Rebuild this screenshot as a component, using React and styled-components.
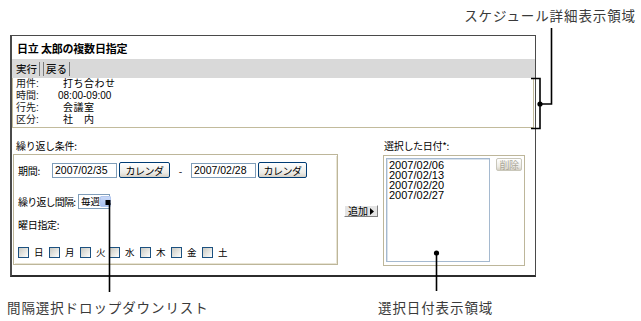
import React from "react";
import styled, { createGlobalStyle } from "styled-components";

const Global = createGlobalStyle`
  html, body { margin: 0; padding: 0; background: #fff; }
  body { font-family: "Noto Sans CJK JP", "Liberation Sans", sans-serif; color: #000; }
`;

const Page = styled.div`
  position: relative;
  width: 641px;
  height: 321px;
  box-sizing: border-box;
  padding: 35px 0 0 10px;
  overflow: hidden;
`;

const Panel = styled.div`
  width: 526px;
  height: 242px;
  box-sizing: border-box;
  border: 1px solid #4a4a4a;
  border-left-width: 2px;
  border-bottom-width: 2px;
  border-bottom-color: #2c2c2c;
  display: flex;
  flex-direction: column;
  background: #fff;
`;

const Title = styled.div`
  height: 23px;
  display: flex;
  align-items: center;
  padding-left: 5px;
  font-size: 11px;
  font-weight: bold;
  letter-spacing: -0.2px;
`;

const Toolbar = styled.div`
  height: 19px;
  background: #d9d9d9;
  display: flex;
  align-items: center;
  padding-left: 4px;
  font-size: 10.5px;
  font-weight: 500;
  color: #111;
`;

const ToolItem = styled.span`
  padding: 0 2px 0 ${(p) => (p.$first ? 0 : 2)}px;
  margin-right: 3px;
  line-height: 14px;
  border-right: 1px solid #7a7a7a;
  border-left: ${(p) => (p.$first ? "none" : "1px solid #7a7a7a")};
`;

const Details = styled.div`
  height: 50px;
  box-sizing: border-box;
  margin-right: 1px;
  border: 1px solid #c2bb9c;
  border-top: none;
  padding: 0 0 0 3px;
  display: grid;
  grid-template-columns: 46px 1fr;
  grid-auto-rows: 12px;
  font-family: "Liberation Sans", "Noto Sans CJK JP", sans-serif;
  font-size: 10px;
  line-height: 12px;
`;

const DLabel = styled.span`
  color: #222;
`;

const DValue = styled.span`
  margin-left: ${(p) => p.$indent || 0}px;
  letter-spacing: ${(p) => (p.$num ? "0" : "0.5px")};
`;

const Lower = styled.div`
  flex: 1;
  display: flex;
  padding-left: 1px;
  font-size: 10px;
`;

const Column = styled.div`
  width: ${(p) => p.$w}px;
  display: flex;
  flex-direction: column;
  padding-top: 10px;
`;

const ColLabel = styled.div`
  height: ${(p) => p.$h || 16}px;
  line-height: 16px;
  padding-left: ${(p) => p.$pl || 3}px;
  letter-spacing: -0.3px;
  white-space: nowrap;
`;

const GroupBox = styled.div`
  height: 111px;
  box-sizing: border-box;
  border: 1px solid #bdb69a;
  box-shadow: inset 1px 1px 0 #fff, inset -1px -1px 0 #e8e4d4;
  padding: 7px 0 0 4px;
  display: flex;
  flex-direction: column;
`;

const Row = styled.div`
  height: 16px;
  margin-top: ${(p) => p.$mt || 0}px;
  display: flex;
  align-items: center;
  white-space: nowrap;
`;

const RowLabel = styled.span`
  width: ${(p) => (p.$w ? `${p.$w}px` : "auto")};
  flex-shrink: 0;
  letter-spacing: ${(p) => p.$ls ?? -0.3}px;
  white-space: nowrap;
`;

const TextInput = styled.div`
  width: 65px;
  height: 15px;
  box-sizing: border-box;
  border: 1px solid #7f9db9;
  font-family: "Liberation Sans", sans-serif;
  font-size: 10.5px;
  line-height: 13px;
  padding-left: 2px;
`;

const Button = styled.div`
  width: ${(p) => p.$w}px;
  height: ${(p) => p.$h || 16}px;
  box-sizing: border-box;
  margin-left: ${(p) => p.$ml || 0}px;
  border: 1px solid ${(p) => (p.$disabled ? "#c9c7ba" : "#003c74")};
  border-radius: 2px;
  background: linear-gradient(#ffffff, #ecebe6 70%, #d6d0c5);
  color: ${(p) => (p.$disabled ? "#aca899" : "#000")};
  display: flex;
  align-items: center;
  justify-content: center;
  font-size: 10px;
  letter-spacing: -0.5px;
  white-space: nowrap;
`;

const Dash = styled.span`
  width: 21px;
  text-align: center;
`;

const Select = styled.div`
  width: 32px;
  height: 15px;
  box-sizing: border-box;
  border: 1px solid #7f9db9;
  display: flex;
  align-items: center;
  justify-content: space-between;
  padding: 0 1px 0 2px;
  font-size: 9.5px;
  white-space: nowrap;
`;

const SelectArrow = styled.span`
  width: 11px;
  height: 11px;
  flex-shrink: 0;
  border-radius: 1px;
  background: linear-gradient(#c8d8f8, #a8c0ee);
  border: 1px solid #b4c8f0;
  box-sizing: border-box;
`;

const Checks = styled.div`
  display: flex;
  align-items: center;
`;

const CheckItem = styled.label`
  display: flex;
  align-items: center;
  width: ${(p) => p.$w || 31}px;
  font-size: 9.5px;
`;

const Box = styled.span`
  width: 11px;
  height: 11px;
  box-sizing: border-box;
  border: 1px solid #1c5180;
  background: linear-gradient(135deg, #c9c9c2, #f4f4f1 80%, #fff);
  margin-right: 5px;
`;

const Middle = styled.div`
  width: 45px;
  padding: 77px 0 0 6px;
  box-sizing: border-box;
`;

const AddButton = styled.div`
  width: 34px;
  height: 12px;
  box-sizing: border-box;
  border: 1px solid #fff;
  border-right-color: #808080;
  border-bottom-color: #808080;
  background: #e4e4e4;
  font-size: 10px;
  line-height: 10px;
  display: flex;
  align-items: center;
  padding-left: 3px;
  gap: 1px;
  white-space: nowrap;
`;

const RightBox = styled.div`
  height: 111px;
  box-sizing: border-box;
  border: 1px solid #bdb69a;
  box-shadow: inset 1px 1px 0 #fff;
  padding: 2px 0 0 2px;
  display: flex;
  align-items: flex-start;
`;

const ListBox = styled.div`
  width: 104px;
  height: 104px;
  box-sizing: border-box;
  border: 1px solid #a5b9cf;
  box-shadow: inset 1px 1px 0 #d9e2ec;
  padding: 1px 0 0 2px;
  font-family: "Liberation Sans", sans-serif;
  font-size: 11px;
  line-height: 10px;
`;

const Overlay = styled.svg`
  position: absolute;
  left: 0;
  top: 0;
  pointer-events: none;
`;

const Note = styled.div`
  position: absolute;
  left: ${(p) => (p.$left != null ? `${p.$left}px` : "auto")};
  right: ${(p) => (p.$right != null ? `${p.$right}px` : "auto")};
  top: ${(p) => p.$top}px;
  font-size: 13.5px;
  letter-spacing: 0.9px;
  color: #3a3a3a;
  line-height: 18px;
  white-space: nowrap;
`;

const days = ["日", "月", "火", "水", "木", "金", "土"];
const dates = ["2007/02/06", "2007/02/13", "2007/02/20", "2007/02/27"];

export default function App() {
  return (
    <>
      <Global />
      <Page>
        <Panel>
          <Title>日立 太郎の複数日指定</Title>
          <Toolbar>
            <ToolItem $first>実行</ToolItem>
            <ToolItem>戻る</ToolItem>
          </Toolbar>
          <Details>
            <DLabel>用件:</DLabel>
            <DValue $indent={1}>打ち合わせ</DValue>
            <DLabel>時間:</DLabel>
            <DValue $num $indent={-4}>08:00-09:00</DValue>
            <DLabel>行先:</DLabel>
            <DValue $indent={1}>会議室</DValue>
            <DLabel>区分:</DLabel>
            <DValue $indent={1}>社　内</DValue>
          </Details>
          <Lower>
            <Column $w={325}>
              <ColLabel $pl={3}>繰り返し条件:</ColLabel>
              <GroupBox>
                <Row>
                  <RowLabel $w={34}>期間:</RowLabel>
                  <TextInput>2007/02/35</TextInput>
                  <Button $w={51} $ml={2}>カレンダ</Button>
                  <Dash>-</Dash>
                  <TextInput>2007/02/28</TextInput>
                  <Button $w={49} $ml={2}>カレンダ</Button>
                </Row>
                <Row $mt={15}>
                  <RowLabel $w={60} $ls={-0.8}>繰り返し間隔:</RowLabel>
                  <Select>
                    <span>毎週</span>
                    <SelectArrow />
                  </Select>
                </Row>
                <Row $mt={7}>
                  <RowLabel>曜日指定:</RowLabel>
                </Row>
                <Row $mt={12}>
                  <Checks>
                    {days.map((d, i) => (
                      <CheckItem key={d} $w={i === 2 ? 29 : 31}>
                        <Box />
                        {d}
                      </CheckItem>
                    ))}
                  </Checks>
                </Row>
              </GroupBox>
            </Column>
            <Middle>
              <AddButton>
                追加
                <svg width="6" height="7" viewBox="0 0 6 7">
                  <path d="M1 0 L5 3.5 L1 7 Z" fill="#000" />
                </svg>
              </AddButton>
            </Middle>
            <Column $w={142}>
              <ColLabel $h={17} $pl={1}>選択した日付*:</ColLabel>
              <RightBox>
                <ListBox>
                  {dates.map((d) => (
                    <div key={d}>{d}</div>
                  ))}
                </ListBox>
                <Button $w={26} $h={13} $ml={6} $disabled>削除</Button>
              </RightBox>
            </Column>
          </Lower>
        </Panel>

        <Overlay width="641" height="321" viewBox="0 0 641 321">
          <g stroke="#000" strokeWidth="1.6" fill="none">
            <path d="M531 78.5 H540 V128.5 H531" />
            <path d="M540 104 H551.5 V28" />
            <path d="M109.5 203 V292" />
            <path d="M436.5 253 V291" />
          </g>
          <circle cx="540" cy="104" r="2.6" fill="#000" />
          <rect x="105.5" y="200" width="5" height="5" fill="#000" />
          <circle cx="436.5" cy="253" r="2.6" fill="#000" />
        </Overlay>
        <Note $right={5} $top={6}>スケジュール詳細表示領域</Note>
        <Note $left={7} $top={298}>間隔選択ドロップダウンリスト</Note>
        <Note $left={378} $top={298}>選択日付表示領域</Note>
      </Page>
    </>
  );
}
